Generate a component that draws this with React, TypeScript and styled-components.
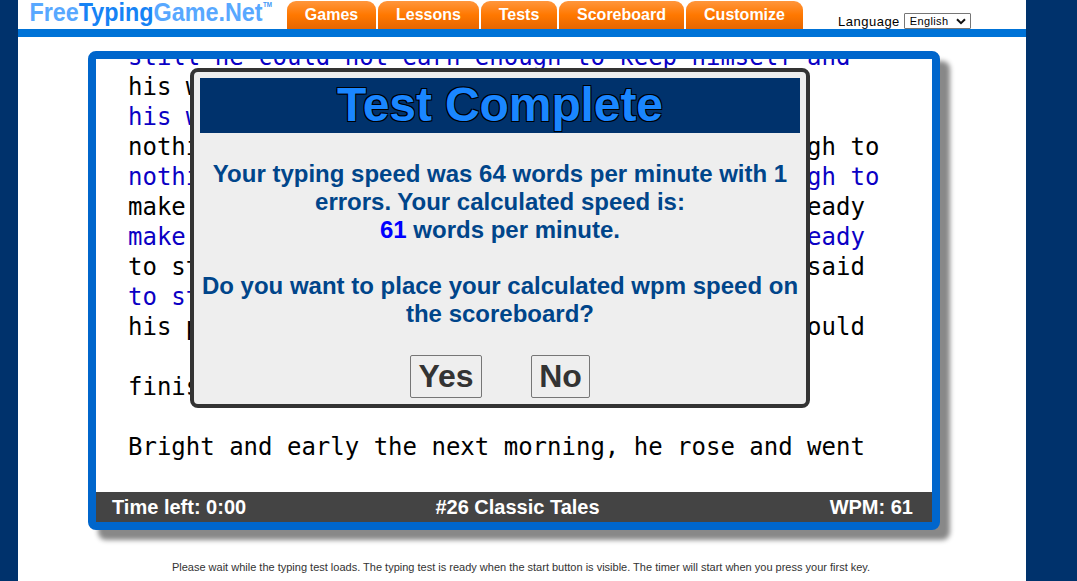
import { useState } from 'react';
import styled, { createGlobalStyle } from 'styled-components';

const GlobalStyle = createGlobalStyle`
  html, body, #root {
    height: 100%;
  }
  body {
    margin: 0;
    overflow: hidden;
    background-color: #00326c;
    font-family: 'Liberation Sans', Arial, sans-serif;
  }
`;

const Page = styled.div`
  width: 1008px;
  height: 581px;
  margin-left: 18px;
  overflow: hidden;
  background-color: #ffffff;
`;

const Header = styled.header`
  display: flex;
  height: 29px;
  border-bottom: 8px solid #0073d7;
`;

const Logo = styled.svg`
  display: block;
  flex: none;
  width: 269px;
  height: 29px;
  font-family: 'Liberation Sans', Arial, sans-serif;
  font-weight: bold;
`;

const Nav = styled.nav`
  display: flex;
  gap: 2px;
  padding-top: 1px;
`;

const Tab = styled.a<{ $width: number }>`
  box-sizing: border-box;
  width: ${({ $width }) => $width}px;
  height: 28px;
  border-radius: 9px 9px 0 0;
  background: linear-gradient(#ff963d 0%, #ff7800 50%, #e66600 100%);
  color: #ffffff;
  font-size: 16px;
  font-weight: bold;
  line-height: 27px;
  text-align: center;
  cursor: pointer;
`;

const Language = styled.label`
  display: flex;
  align-items: flex-start;
  gap: 4px;
  margin-left: 35px;
  padding-top: 13px;
  font-size: 13px;
  line-height: 17px;
  letter-spacing: 0.5px;
  white-space: nowrap;
`;

const SelectBox = styled.span`
  display: flex;
  align-items: center;
  justify-content: space-between;
  box-sizing: border-box;
  width: 67px;
  height: 16px;
  padding: 0 4px 0 5px;
  border: 1px solid #767676;
  border-radius: 1px;
  font-size: 11px;
  letter-spacing: 0.35px;
`;

const Panel = styled.main`
  position: relative;
  box-sizing: border-box;
  display: flex;
  flex-direction: column;
  width: 852px;
  height: 479px;
  margin: 14px 0 0 70px;
  border: 8px solid #0066cc;
  border-radius: 8px;
  background-color: #ffffff;
  box-shadow: 10px 10px 5px #888888;
`;

const TextArea = styled.div`
  flex: 1;
  overflow: hidden;
  padding-left: 32px;
`;

const Lines = styled.div`
  margin-top: -17px;
`;

const Line = styled.div<{ $typed?: boolean }>`
  height: 30px;
  color: ${({ $typed }) => ($typed ? '#0b00c4' : '#000000')};
  font-family: 'DejaVu Sans Mono', monospace;
  font-size: 24px;
  line-height: 30px;
  white-space: pre;
`;

const StatusBar = styled.div`
  display: grid;
  grid-template-columns: 1fr auto 1fr;
  height: 30px;
  padding: 0 19px 0 16px;
  background-color: #444444;
  color: #ffffff;
  font-size: 20px;
  font-weight: bold;
  line-height: 30px;
`;

const StatusTitle = styled.span`
  padding-left: 10px;
`;

const StatusSpeed = styled.span`
  text-align: right;
`;

const Dialog = styled.section`
  position: absolute;
  top: 9px;
  left: 94px;
  box-sizing: border-box;
  width: 620px;
  height: 340px;
  padding: 6px;
  border: 4px solid #333333;
  border-radius: 8px;
  background-color: #eeeeee;
  text-align: center;
`;

const DialogTitle = styled.h1`
  height: 55px;
  margin: 0;
  overflow: hidden;
  background-color: #00326c;
  color: #1a86ff;
  font-size: 48px;
  font-weight: bold;
  line-height: 54px;
  letter-spacing: -0.1px;
  text-shadow: -1px -1px 0 #000, 1px -1px 0 #000, -1px 1px 0 #000, 1px 1px 0 #000;
`;

const Message = styled.p`
  margin: 27px 0 0;
  color: #00458a;
  font-size: 24px;
  font-weight: bold;
  line-height: 28px;
  white-space: nowrap;
`;

const Speed = styled.span`
  color: #0000ff;
`;

const Buttons = styled.div`
  display: flex;
  justify-content: center;
  gap: 49px;
  margin-top: 27px;
`;

const Button = styled.button<{ $width: number }>`
  box-sizing: border-box;
  width: ${({ $width }) => $width}px;
  height: 43px;
  padding: 0;
  border: 1px solid #767676;
  border-radius: 2px;
  background-color: #eeeeee;
  color: #333333;
  font-family: 'Liberation Sans', Arial, sans-serif;
  font-size: 32px;
  font-weight: bold;
  line-height: 41px;
`;

const Notice = styled.p`
  margin: 31px 0 0;
  padding-left: 3px;
  width: 1000px;
  color: #333333;
  font-size: 11px;
  line-height: 13px;
  text-align: center;
  white-space: nowrap;
`;

const tabs = [
  { label: 'Games', width: 89 },
  { label: 'Lessons', width: 101 },
  { label: 'Tests', width: 76 },
  { label: 'Scoreboard', width: 125 },
  { label: 'Customize', width: 117 },
];

const lines = [
  { text: 'still he could not earn enough to keep himself and', typed: true },
  { text: 'his wife. At last,' },
  { text: 'his wife. At last,', typed: true },
  { text: 'nothing was left but one piece of leather, enough to' },
  { text: 'nothing was left but one piece of leather, enough to', typed: true },
  { text: 'make one pair of shoes. He cut these out, all ready' },
  { text: 'make one pair of shoes. He cut these out, all ready', typed: true },
  { text: 'to stitch together the next day. That evening, said' },
  { text: 'to stitch together the next day.', typed: true },
  { text: 'his prayers and went to bed, trusting that he would' },
  { text: '' },
  { text: 'finish them soon.' },
  { text: '' },
  { text: 'Bright and early the next morning, he rose and went' },
];

const SiteLogo = () => (
  <Logo viewBox="0 0 269 29">
    <text x="11.5" y="21" fontSize="26" fill="#58a8ff" textLength="233" lengthAdjust="spacingAndGlyphs">
      Free<tspan fill="#1683f5">Typing</tspan>Game.Net
    </text>
    <text x="245" y="7" fontSize="8" fill="#3e96f5" textLength="9" lengthAdjust="spacingAndGlyphs">
      TM
    </text>
  </Logo>
);

const App = () => {
  const [isOpen, setIsOpen] = useState(true);
  const handleClose = () => setIsOpen(false);

  return (
    <>
      <GlobalStyle />
      <Page>
        <Header>
          <SiteLogo />
          <Nav>
            {tabs.map(({ label, width }) => (
              <Tab key={label} $width={width}>
                {label}
              </Tab>
            ))}
          </Nav>
          <Language>
            Language
            <SelectBox>
              English
              <svg width="10" height="7" viewBox="0 0 10 7">
                <path d="M1 1.2 5 5.2 9 1.2" fill="none" stroke="#111" strokeWidth="2" />
              </svg>
            </SelectBox>
          </Language>
        </Header>
        <Panel>
          <TextArea>
            <Lines>
              {lines.map(({ text, typed }, index) => (
                <Line key={index} $typed={typed}>
                  {text}
                </Line>
              ))}
            </Lines>
          </TextArea>
          <StatusBar>
            <span>Time left: 0:00</span>
            <StatusTitle>#26 Classic Tales</StatusTitle>
            <StatusSpeed>WPM: 61</StatusSpeed>
          </StatusBar>
          {isOpen && (
            <Dialog>
              <DialogTitle>Test Complete</DialogTitle>
              <Message>
                Your typing speed was 64 words per minute with 1
                <br />
                errors. Your calculated speed is:
                <br />
                <Speed>61</Speed> words per minute.
                <br />
                <br />
                Do you want to place your calculated wpm speed on
                <br />
                the scoreboard?
              </Message>
              <Buttons>
                <Button $width={72} onClick={handleClose}>
                  Yes
                </Button>
                <Button $width={59} onClick={handleClose}>
                  No
                </Button>
              </Buttons>
            </Dialog>
          )}
        </Panel>
        <Notice>
          Please wait while the typing test loads. The typing test is ready when the start button is visible. The timer
          will start when you press your first key.
        </Notice>
      </Page>
    </>
  );
};

export default App;
